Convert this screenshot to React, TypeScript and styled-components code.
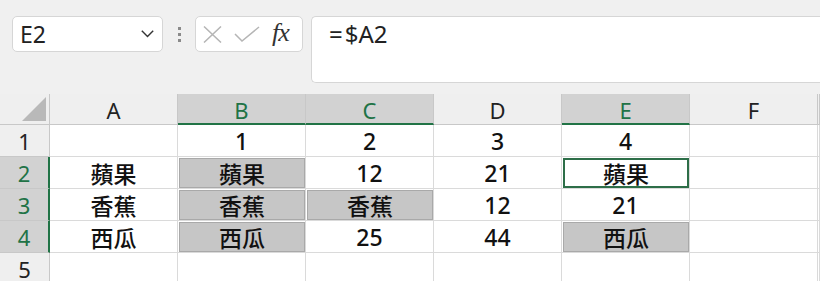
import { createGlobalStyle } from 'styled-components';
import styled from 'styled-components';

const GlobalStyle = createGlobalStyle`
  html, body {
    margin: 0;
    padding: 0;
    background: #f0f0f0;
    overflow: hidden;
  }
`;

const Page = styled.div`
  width: 820px;
  height: 281px;
  overflow: hidden;
  background: #f0f0f0;
  font-family: 'Open Sans', 'Noto Sans', 'Noto Sans CJK TC', sans-serif;
  color: #222;
`;

const Toolbar = styled.div`
  display: flex;
  align-items: flex-start;
  height: 94px;
  box-sizing: border-box;
  padding: 16px 0 0 12px;
`;

const NameBox = styled.div`
  width: 151px;
  height: 36px;
  box-sizing: border-box;
  border: 1px solid #d6d6d6;
  border-radius: 5px;
  background: #fff;
  display: flex;
  align-items: center;
  justify-content: space-between;
  padding: 0 8px 0 7px;
  font-family: 'Noto Sans', sans-serif;
  font-size: 23px;
  color: #222;
`;

const Grip = styled.div`
  width: 32px;
  display: flex;
  flex-direction: column;
  align-items: center;
  gap: 3px;
  padding-top: 11px;

  span {
    width: 3px;
    height: 3px;
    background: #8a8a8a;
  }
`;

const FuncBox = styled.div`
  width: 108px;
  height: 36px;
  box-sizing: border-box;
  border: 1px solid #d6d6d6;
  border-radius: 5px;
  background: #fff;
  display: flex;
  align-items: center;
  padding: 0 4px 0 7px;
  gap: 12px;
`;

const Fx = styled.span`
  font-family: 'Liberation Serif', 'DejaVu Serif', serif;
  font-style: italic;
  font-size: 26px;
  color: #333;
  margin-left: 0px;
  letter-spacing: -1px;
  line-height: 1;
  padding-bottom: 3px;
`;

const FormulaBar = styled.div`
  flex: 1;
  height: 67px;
  margin-left: 8px;
  box-sizing: border-box;
  border: 1px solid #d6d6d6;
  border-right: none;
  border-radius: 5px 0 0 5px;
  background: #fff;
  padding: 0 0 0 17px;
  font-family: 'Noto Sans', sans-serif;
  font-size: 24px;
  line-height: 34px;
  color: #222;
`;

const Eq = styled.span`
  margin-right: 2px;
`;

const Grid = styled.div`
  display: grid;
  grid-template-columns: 50px repeat(6, 128px) 1fr;
  grid-template-rows: 31px repeat(5, 32px);
  background: #fff;
`;

const Corner = styled.div`
  background: #efefef;
  border-right: 1px solid #c8c8c8;
  border-bottom: 1px solid #c8c8c8;
  position: relative;

  &::after {
    content: '';
    position: absolute;
    right: 3px;
    bottom: 3px;
    width: 0;
    height: 0;
    border-left: 24px solid transparent;
    border-bottom: 24px solid #b9b9b9;
  }
`;

const ColHead = styled.div<{ $on?: boolean }>`
  background: ${(p) => (p.$on ? '#d2d2d2' : '#efefef')};
  color: ${(p) => (p.$on ? '#217346' : '#222')};
  border-right: 1px solid #c8c8c8;
  border-bottom: ${(p) => (p.$on ? '2px solid #217346' : '1px solid #c8c8c8')};
  box-sizing: border-box;
  display: flex;
  align-items: center;
  justify-content: center;
  padding-top: 2px;
  font-family: 'Noto Sans', sans-serif;
  font-size: 22px;
`;

const RowHead = styled.div<{ $on?: boolean }>`
  background: ${(p) => (p.$on ? '#d2d2d2' : '#efefef')};
  color: ${(p) => (p.$on ? '#217346' : '#222')};
  border-right: ${(p) => (p.$on ? '2px solid #217346' : '1px solid #c8c8c8')};
  border-bottom: 1px solid #c8c8c8;
  box-sizing: border-box;
  display: flex;
  align-items: center;
  justify-content: center;
  font-family: 'Noto Sans', sans-serif;
  font-size: 22px;
`;

const Cell = styled.div<{ $sel?: boolean; $active?: boolean }>`
  border-right: 1px solid #dadada;
  border-bottom: 1px solid #dadada;
  box-sizing: border-box;
  display: flex;
  align-items: stretch;
  padding: ${(p) => (p.$sel || p.$active ? '0 0 0 1px' : '0')};
`;

const Value = styled.div<{ $sel?: boolean; $active?: boolean }>`
  flex: 1;
  display: flex;
  align-items: center;
  justify-content: center;
  box-sizing: border-box;
  font-family: 'Noto Sans', 'Noto Sans CJK TC', sans-serif;
  font-size: 23px;
  font-weight: 500;
  color: #111;
  background: ${(p) => (p.$sel ? '#c6c6c6' : 'transparent')};
  border: ${(p) =>
    p.$active ? '2px solid #2d6e48' : p.$sel ? '1px solid #a9a9a9' : 'none'};
  margin-top: ${(p) => (p.$sel || p.$active ? '1px' : '0')};
`;

type CellData = { v: string; sel?: boolean; active?: boolean };

const cols = ['A', 'B', 'C', 'D', 'E', 'F'];
const selCols = ['B', 'C', 'E'];
const selRows = [2, 3, 4];

const rows: CellData[][] = [
  [{ v: '' }, { v: '1' }, { v: '2' }, { v: '3' }, { v: '4' }, { v: '' }],
  [
    { v: '蘋果' },
    { v: '蘋果', sel: true },
    { v: '12' },
    { v: '21' },
    { v: '蘋果', active: true },
    { v: '' },
  ],
  [
    { v: '香蕉' },
    { v: '香蕉', sel: true },
    { v: '香蕉', sel: true },
    { v: '12' },
    { v: '21' },
    { v: '' },
  ],
  [
    { v: '西瓜' },
    { v: '西瓜', sel: true },
    { v: '25' },
    { v: '44' },
    { v: '西瓜', sel: true },
    { v: '' },
  ],
  [{ v: '' }, { v: '' }, { v: '' }, { v: '' }, { v: '' }, { v: '' }],
];

function App() {
  return (
    <Page>
      <GlobalStyle />
      <Toolbar>
        <NameBox>
          <span>E2</span>
          <svg width="13" height="8" viewBox="0 0 13 8">
            <path d="M0.8 0.8 L6.5 6.6 L12.2 0.8" fill="none" stroke="#333" strokeWidth="1.4" />
          </svg>
        </NameBox>
        <Grip>
          <span />
          <span />
          <span />
        </Grip>
        <FuncBox>
          <svg width="19" height="17" viewBox="0 0 19 17">
            <path d="M1 0.5 L18 16.5 M18 0.5 L1 16.5" stroke="#b5b5b5" strokeWidth="1.5" fill="none" />
          </svg>
          <svg width="26" height="16" viewBox="0 0 26 16">
            <path d="M1 8 L8 15 L25 1" stroke="#b5b5b5" strokeWidth="1.5" fill="none" />
          </svg>
          <Fx>fx</Fx>
        </FuncBox>
        <FormulaBar>
          <Eq>=</Eq>$A2
        </FormulaBar>
      </Toolbar>
      <Grid>
        <Corner />
        {cols.map((c) => (
          <ColHead key={c} $on={selCols.includes(c)}>
            {c}
          </ColHead>
        ))}
        <ColHead />
        {rows.map((r, i) => (
          <>
            <RowHead key={`h${i}`} $on={selRows.includes(i + 1)}>
              {i + 1}
            </RowHead>
            {r.map((c, j) => (
              <Cell key={`c${i}-${j}`} $sel={c.sel} $active={c.active}>
                <Value $sel={c.sel} $active={c.active}>
                  {c.v}
                </Value>
              </Cell>
            ))}
            <Cell key={`e${i}`} />
          </>
        ))}
      </Grid>
    </Page>
  );
}

export default App;
